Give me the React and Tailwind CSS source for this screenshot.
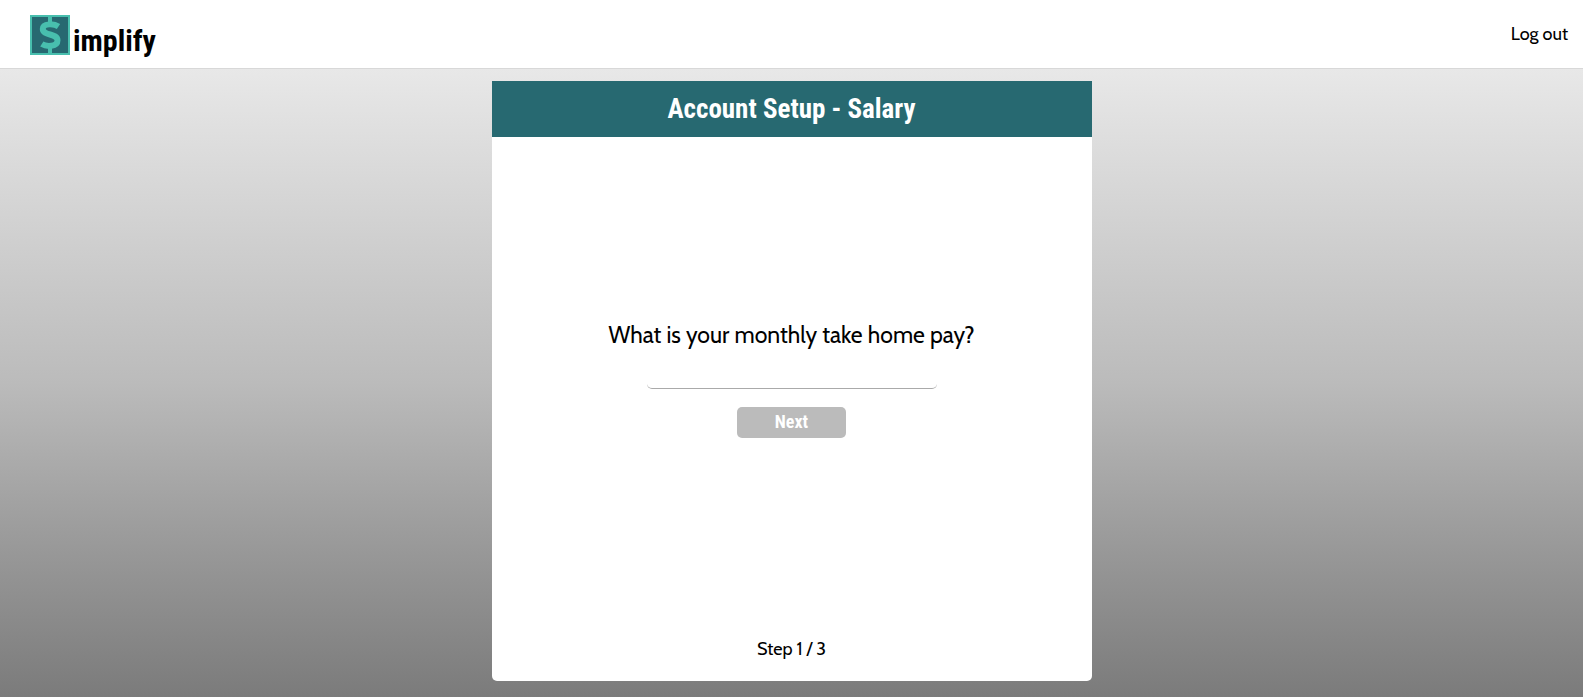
export default function App() {
  return (
    <div className="flex min-h-screen flex-col font-['Cabin','Lato',sans-serif] text-black">
      <header className="flex h-[69px] items-center justify-between border-b border-[#d8d8d8] bg-white pr-[15px] pl-[30px]">
        <a href="#home" className="mt-0.5 flex items-end gap-[3px]">
          <svg viewBox="0 0 40 40" className="size-10" aria-hidden="true">
            <rect x="1" y="1" width="38" height="38" fill="#276971" stroke="#48bfae" strokeWidth="2" />
            <path d="M20 1v9M20 31v8" stroke="#48bfae" strokeWidth="4" />
            <path d="M28.500 11.500C24 8.500 12.800 8 12.800 14C12.800 21 27.500 18 27.500 25.300C27.500 32 16.500 32 11.800 29" fill="none" stroke="#48bfae" strokeWidth="6" />
          </svg>
          <span className="font-['Roboto_Condensed','Liberation_Sans_Narrow',sans-serif] text-3xl leading-7 font-bold">implify</span>
        </a>
        <a href="#logout" className="text-lg leading-7">Log out</a>
      </header>
      <main className="flex flex-1 justify-center bg-linear-to-b from-[#e8e8e8] via-[#bbbbbb] to-[#7b7b7b] pt-3 pb-4">
        <section className="flex w-full max-w-[600px] flex-col rounded-b-[5px] bg-white">
          <h1 className="bg-[#276971] py-3 text-center font-['Roboto_Condensed','Liberation_Sans_Narrow',sans-serif] text-[27px] leading-8 font-bold text-white">Account Setup - Salary</h1>
          <form className="flex flex-1 flex-col items-center justify-center pb-4">
            <label htmlFor="pay" className="text-[23px] leading-8">What is your monthly take home pay?</label>
            <input id="pay" type="text" className="mt-1.5 h-8 w-[290px] rounded-[5px] border-b border-[#aaa] text-center outline-none" />
            <button type="button" className="mt-[18px] h-[31px] w-[109px] rounded-[5px] bg-[#bbb] font-['Roboto_Condensed','Liberation_Sans_Narrow',sans-serif] text-lg leading-7 font-bold text-white">Next</button>
          </form>
          <p className="pb-[18px] text-center text-lg leading-7">Step 1 / 3</p>
        </section>
      </main>
    </div>
  );
}
